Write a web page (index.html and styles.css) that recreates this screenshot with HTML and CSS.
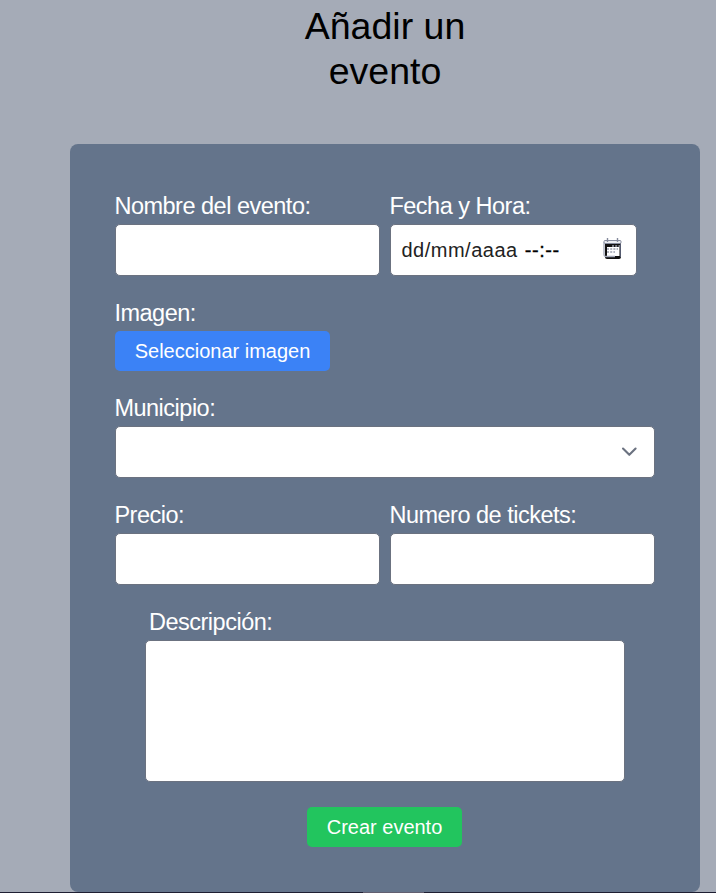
FILE: index.html
```html
<!DOCTYPE html>
<html lang="es">
<head>
<meta charset="utf-8">
<title>Añadir un evento</title>
<link rel="stylesheet" href="styles.css">
</head>
<body>
<main class="page">
  <h1 class="title">Añadir un<br>evento</h1>
  <form class="card">
    <div class="row">
      <div class="field">
        <label class="label" for="nombre">Nombre del evento:</label>
        <input class="control" id="nombre" type="text">
      </div>
      <div class="field">
        <label class="label">Fecha y Hora:</label>
        <div class="control date">
          <span class="date-text">dd/mm/aaaa</span><span class="time-text">--:--</span>
          <svg class="calendar" width="20" height="22" viewBox="0 0 20 22">
            <path d="M2 5H18V19Q18 21 16 21H4Q2 21 2 19Z" fill="#111"/>
            <rect x="4" y="9" width="12.5" height="9" fill="#fff"/>
            <rect x="1" y="2.5" width="17" height="3" rx="1" fill="#eceef3" stroke="#858b9d"/>
            <path d="M1 4V17Q1 18.5 3 18.5H12" fill="none" stroke="#a3a8b8" stroke-width="1.3"/>
            <path d="M4.5 0V4M14.5 0V4" stroke="#858b9d" stroke-width="1.4"/>
            <path d="M9 8H17M4 11H15M4 14H12" stroke="#9a9eae" stroke-width="1.4" stroke-dasharray="2 1.2"/>
            <path d="M17.5 6V19" stroke="#555b70"/>
          </svg>
        </div>
      </div>
    </div>
    <div class="field">
      <label class="label">Imagen:</label>
      <button class="button choose" type="button">Seleccionar imagen</button>
    </div>
    <div class="field">
      <label class="label">Municipio:</label>
      <div class="control select">
        <svg width="30" height="30" viewBox="0 0 30 30"><path d="M9 11.5l6.3 6.3 6.3-6.3" fill="none" stroke="#6b7280" stroke-width="2.1" stroke-linecap="round" stroke-linejoin="round"/></svg>
      </div>
    </div>
    <div class="row">
      <div class="field">
        <label class="label" for="precio">Precio:</label>
        <input class="control" id="precio" type="text">
      </div>
      <div class="field">
        <label class="label" for="tickets">Numero de tickets:</label>
        <input class="control" id="tickets" type="text">
      </div>
    </div>
    <div class="field description">
      <label class="label" for="descripcion">Descripción:</label>
      <textarea class="control area" id="descripcion"></textarea>
    </div>
    <button class="button create" type="button">Crear evento</button>
  </form>
</main>
<footer class="edge"><div class="edge-mark"></div></footer>
</body>
</html>
```
FILE: styles.css
```css
* { box-sizing: border-box; }
body {
  margin: 0;
  height: 893px;
  overflow: hidden;
  background: #a5abb7;
  font-family: "Liberation Sans", Arial, sans-serif;
}
.page {
  height: 892px;
  padding: 4px 16px 0 70px;
}
.title {
  margin: 0 0 50px;
  font-size: 37.5px;
  line-height: 45px;
  font-weight: 400;
  text-align: center;
  color: #000;
}
.card {
  height: 748px;
  padding: 44px 45px 0;
  display: flex;
  flex-direction: column;
  gap: 19px;
  border-radius: 8px;
  background: #64748b;
}
.row {
  display: grid;
  grid-template-columns: 265px 265px;
  gap: 10px;
}
.field { display: flex; flex-direction: column; }
.label {
  height: 36px;
  margin-left: -0.6px;
  line-height: 36px;
  font-size: 23.5px;
  letter-spacing: -0.5px;
  color: #fff;
  white-space: nowrap;
}
.control {
  width: 100%;
  height: 52px;
  margin: 0;
  border: 1px solid #6b7280;
  border-radius: 5px;
  background: #fff;
  outline: none;
}
.date {
  width: 247px;
  padding: 0 13px 0 10.5px;
  display: flex;
  align-items: center;
  font-size: 20px;
  color: #222;
}
.date-text { letter-spacing: 0.5px; }
.time-text { margin-left: 7px; letter-spacing: 0.6px; color: #000; -webkit-text-stroke: 0.3px #000; }
.calendar { margin: -3px 0 0 auto; }
.button {
  height: 40px;
  padding: 0;
  border: 0;
  border-radius: 5px;
  font-family: inherit;
  font-size: 20px;
  color: #fff;
}
.choose { width: 215px; background: #3b82f6; }
.select {
  width: 540px;
  padding-right: 10px;
  display: flex;
  align-items: center;
  justify-content: flex-end;
}
.description { width: 480px; align-self: center; }
.description .label { margin-left: 0; padding-left: 4px; }
.area { height: 142px; resize: none; display: block; }
.create { width: 155px; margin: 6px 0 0 192px; align-self: flex-start; background: #22c55e; }
.edge { height: 1px; background: #1e1e32; }
.edge-mark { width: 61px; height: 1px; margin-left: 363px; background: #625f70; }
```
